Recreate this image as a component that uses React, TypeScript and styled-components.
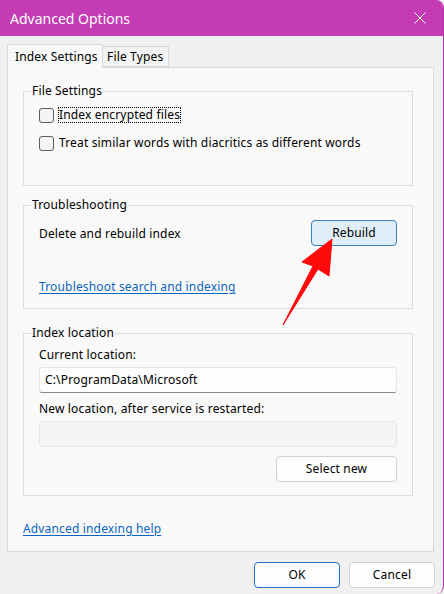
import React from "react";
import styled, { createGlobalStyle } from "styled-components";

const GlobalStyle = createGlobalStyle`
  html, body { margin: 0; padding: 0; }
  body {
    width: 444px;
    height: 594px;
    overflow: hidden;
    background: #f0f0f0;
    font-family: "Noto Sans", "Open Sans", sans-serif;
    font-size: 12px;
    letter-spacing: 0.16px;
    color: #000;
  }
  * { box-sizing: border-box; }
`;

const Window = styled.div`
  position: relative;
  width: 444px;
  height: 594px;
  display: flex;
  flex-direction: column;
  background: #f0f0f0;
  border-right: 1px solid #b533a6;
  border-radius: 0 8px 8px 0;
  overflow: hidden;
`;

const TitleBar = styled.div`
  height: 36px;
  flex: none;
  display: flex;
  align-items: center;
  justify-content: space-between;
  padding-left: 10px;
  background: #c33cb4;
  color: #fff;
  font-size: 14px;
  letter-spacing: 0;
`;

const CloseButton = styled.div`
  width: 46px;
  height: 36px;
  display: flex;
  align-items: center;
  justify-content: center;
`;

const Content = styled.div`
  display: flex;
  flex-direction: column;
  padding: 8px 9px 0 7px;
`;

const TabRow = styled.div`
  display: flex;
  align-items: flex-end;
  height: 23px;
`;

const Tab = styled.div<{ $active?: boolean; $w: number }>`
  position: relative;
  z-index: ${(p) => (p.$active ? 2 : 1)};
  width: ${(p) => p.$w}px;
  height: ${(p) => (p.$active ? 24 : 21)}px;
  margin-bottom: ${(p) => (p.$active ? -1 : 0)}px;
  padding: 0 0 0 ${(p) => (p.$active ? 7 : 4)}px;
  display: flex;
  align-items: center;
  border: 1px solid #d9d9d9;
  border-bottom: ${(p) => (p.$active ? "none" : "1px solid #d9d9d9")};
  border-left: ${(p) => (p.$active ? "1px solid #d9d9d9" : "none")};
  background: ${(p) => (p.$active ? "#f9f9f9" : "#f3f3f3")};
  line-height: 16px;
  white-space: nowrap;
`;

const Panel = styled.div`
  border: 1px solid #d9d9d9;
  background: #f9f9f9;
  padding: 23px 20px 14px 15px;
  display: flex;
  flex-direction: column;
`;

const Group = styled.section<{ $mt?: number; $pb: number }>`
  margin-top: ${(p) => p.$mt ?? 0}px;
  border: 1px solid #dcdcdc;
  padding: 0 15px ${(p) => p.$pb}px 15px;
  display: flex;
  flex-direction: column;
`;

const Legend = styled.div`
  align-self: flex-start;
  margin: -9px 0 0 -8px;
  padding: 0 1px;
  background: #f9f9f9;
  line-height: 16px;
`;

const CheckRow = styled.label<{ $mt: number }>`
  margin-top: ${(p) => p.$mt}px;
  display: flex;
  align-items: center;
  gap: 4px;
  height: 16px;
  line-height: 14px;
`;

const CheckBox = styled.span`
  width: 15px;
  height: 15px;
  flex: none;
  border: 1px solid #5c5c5c;
  border-radius: 3px;
  background: #f5f5f5;
`;

const CheckText = styled.span<{ $focused?: boolean }>`
  border: 1px dotted ${(p) => (p.$focused ? "#000" : "transparent")};
  line-height: 14px;
  white-space: nowrap;
`;

const Row = styled.div<{ $mt: number }>`
  margin-top: ${(p) => p.$mt}px;
  display: flex;
  align-items: center;
  justify-content: space-between;
`;

const Text = styled.div<{ $mt: number }>`
  margin-top: ${(p) => p.$mt}px;
  line-height: 16px;
`;

const Link = styled.a<{ $mt: number }>`
  margin-top: ${(p) => p.$mt}px;
  align-self: flex-start;
  line-height: 16px;
  color: #0a64c0;
  text-decoration: underline;
  text-underline-offset: 2px;
`;

const Button = styled.button<{ $variant?: "accent" | "hover"; $w: number }>`
  width: ${(p) => p.$w}px;
  height: 26px;
  flex: none;
  font-family: inherit;
  font-size: 12px;
  letter-spacing: 0.16px;
  color: #000;
  border-radius: 4px;
  border: 1px solid
    ${(p) =>
      p.$variant === "accent" ? "#1d6fc1" : p.$variant === "hover" ? "#3a7fc0" : "#d0d0d0"};
  background: ${(p) => (p.$variant === "hover" ? "#e0eef9" : "#fdfdfd")};
  padding: 0;
  line-height: 16px;
`;

const Input = styled.div<{ $mt: number; $disabled?: boolean }>`
  margin-top: ${(p) => p.$mt}px;
  height: 26px;
  display: flex;
  align-items: center;
  padding-left: 5px;
  border: 1px solid #e5e5e5;
  border-bottom-color: ${(p) => (p.$disabled ? "#e5e5e5" : "#8a8a8a")};
  background: ${(p) => (p.$disabled ? "#f5f5f5" : "#fdfdfd")};
  border-radius: 3px;
  line-height: 16px;
`;

const RightRow = styled.div<{ $mt: number }>`
  margin-top: ${(p) => p.$mt}px;
  display: flex;
  justify-content: flex-end;
`;

const Footer = styled.div`
  display: flex;
  justify-content: flex-end;
  gap: 9px;
  padding-top: 10px;
  margin-right: -1px;
`;

const Overlay = styled.svg`
  position: absolute;
  left: 0;
  top: 0;
  pointer-events: none;
`;

export default function App() {
  return (
    <>
      <GlobalStyle />
      <Window>
        <TitleBar>
          <span>Advanced Options</span>
          <CloseButton>
            <svg width="14" height="14" viewBox="0 0 14 14">
              <path d="M1.5 1.5L12.5 12.5M12.5 1.5L1.5 12.5" stroke="#fff" strokeWidth="1" />
            </svg>
          </CloseButton>
        </TitleBar>
        <Content>
          <TabRow>
            <Tab $active $w={96}>
              Index Settings
            </Tab>
            <Tab $w={66}>File Types</Tab>
          </TabRow>
          <Panel>
            <Group $pb={34}>
              <Legend>File Settings</Legend>
              <CheckRow $mt={8}>
                <CheckBox />
                <CheckText $focused>Index encrypted files</CheckText>
              </CheckRow>
              <CheckRow $mt={12}>
                <CheckBox />
                <CheckText>Treat similar words with diacritics as different words</CheckText>
              </CheckRow>
            </Group>
            <Group $mt={19} $pb={13}>
              <Legend>Troubleshooting</Legend>
              <Row $mt={7}>
                <span>Delete and rebuild index</span>
                <Button $variant="hover" $w={86}>
                  Rebuild
                </Button>
              </Row>
              <Link $mt={33}>Troubleshoot search and indexing</Link>
            </Group>
            <Group $mt={24} $pb={13}>
              <Legend>Index location</Legend>
              <Text $mt={6}>Current location:</Text>
              <Input $mt={4}>C:\ProgramData\Microsoft</Input>
              <Text $mt={8}>New location, after service is restarted:</Text>
              <Input $mt={4} $disabled />
              <RightRow $mt={9}>
                <Button $w={121}>Select new</Button>
              </RightRow>
            </Group>
            <Link $mt={25}>Advanced indexing help</Link>
          </Panel>
          <Footer>
            <Button $variant="accent" $w={86}>
              OK
            </Button>
            <Button $w={86}>Cancel</Button>
          </Footer>
        </Content>
        <Overlay width="444" height="594" viewBox="0 0 444 594">
          <polygon
            points="332,239 302,262 313,266 283,325 318,269 329,276"
            fill="#ff0a0a"
            stroke="#ff0a0a"
            strokeWidth="1"
            strokeLinejoin="round"
          />
        </Overlay>
      </Window>
    </>
  );
}
